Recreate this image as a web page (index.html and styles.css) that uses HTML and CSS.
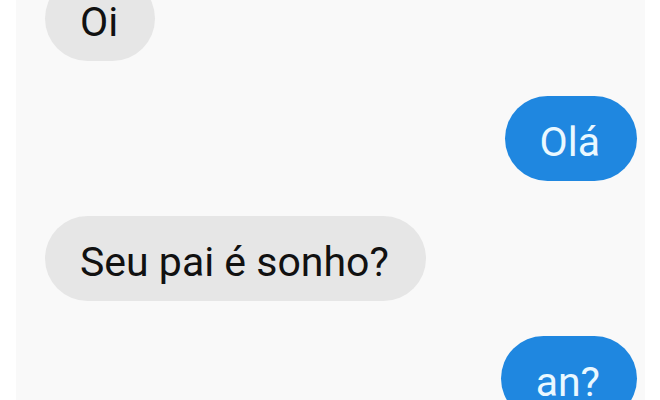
FILE: index.html
```html
<!DOCTYPE html>
<html lang="pt">
<head>
<meta charset="utf-8">
<link rel="stylesheet" href="styles.css">
</head>
<body>
<div class="panel">
  <div class="row row-in first"><div class="bubble in">Oi</div></div>
  <div class="row row-out"><div class="bubble out">Olá</div></div>
  <div class="row row-in"><div class="bubble in">Seu pai é sonho?</div></div>
  <div class="row row-out"><div class="bubble out">an?</div></div>
</div>
</body>
</html>
```

FILE: styles.css
```css
html, body {
  margin: 0;
  padding: 0;
  background: #ffffff;
}
body {
  width: 660px;
  height: 400px;
  overflow: hidden;
  font-family: Roboto, "Liberation Sans", sans-serif;
}
.panel {
  margin: 0 15px 0 16px;
  height: 400px;
  background: #f9f9f9;
  display: flex;
  flex-direction: column;
  gap: 35px;
  overflow: hidden;
}
.row {
  display: flex;
}
.row.first {
  margin-top: -24px;
}
.row-in {
  justify-content: flex-start;
  padding-left: 29px;
}
.row-out {
  justify-content: flex-end;
  padding-right: 8px;
}
.bubble {
  flex: none;
  height: 85px;
  box-sizing: border-box;
  padding: 8px 37px 0 35px;
  line-height: 77px;
  font-size: 41px;
  border-radius: 43px;
  white-space: nowrap;
}
.in {
  background: #e6e6e6;
  color: #111111;
}
.out {
  background: #1f87e0;
  color: #eaf8ff;
}
```
